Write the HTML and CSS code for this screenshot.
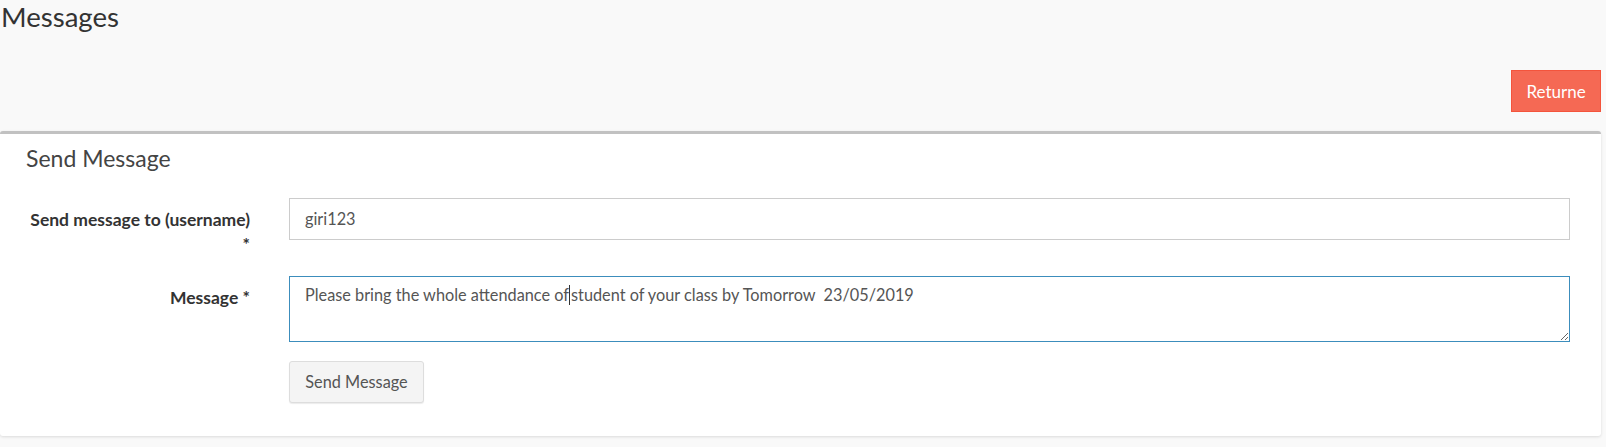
FILE: index.html
```html
<!DOCTYPE html>
<html>
<head>
<meta charset="utf-8">
<link rel="stylesheet" href="styles.css">
</head>
<body>
<div class="page">
  <header class="content-header">
    <h1 class="page-title">Messages</h1>
    <div class="header-actions">
      <button class="btn btn-danger">Returne</button>
    </div>
  </header>
  <section class="box">
    <div class="box-header">
      <h3 class="box-title">Send Message</h3>
    </div>
    <form class="box-body form">
      <div class="form-row">
        <label class="form-label">Send message to (username) *</label>
        <div class="form-field">
          <div class="input">giri123</div>
        </div>
      </div>
      <div class="form-row">
        <label class="form-label">Message *</label>
        <div class="form-field">
          <div class="textarea">Please bring the whole attendance of<span class="caret"></span>student of your class by Tomorrow&nbsp; 23/05/2019</div>
        </div>
      </div>
      <div class="form-row">
        <div class="form-label"></div>
        <div class="form-field">
          <button type="button" class="btn btn-default">Send Message</button>
        </div>
      </div>
    </form>
  </section>
</div>
</body>
</html>
```

FILE: styles.css
```css
* { box-sizing: border-box; }
html, body {
  margin: 0;
  padding: 0;
  background: #f9f9f9;
}
body {
  font-family: "Lato", "Open Sans", sans-serif;
  font-size: 17.5px;
  color: #333;
  height: 447px;
  overflow: hidden;
}
.page {
  padding: 0 5px 0 0;
}
.content-header {
  display: flex;
  flex-direction: column;
  height: 131px;
}
.page-title {
  margin: 0;
  padding: 2px 0 0 1px;
  font-size: 27.6px;
  line-height: 30px;
  font-weight: 400;
  color: #333;
}
.header-actions {
  display: flex;
  justify-content: flex-end;
  margin-top: 38px;
}
.btn {
  font-family: inherit;
  line-height: 1;
  height: 42px;
  padding: 0;
  white-space: nowrap;
  cursor: pointer;
}
.btn-danger {
  width: 90px;
  font-size: 17px;
  background: #f56954;
  border: 1px solid #f4543c;
  border-radius: 0;
  color: #fff;
}
.btn-default {
  width: 135px;
  font-size: 16.3px;
  background: #f4f4f4;
  border: 1px solid #ddd;
  border-radius: 3px;
  color: #555;
  box-shadow: 0 1px 1px rgba(0,0,0,0.08);
}
.box {
  background: #fff;
  border-top: 3px solid #c1c1c1;
  border-radius: 3px;
  box-shadow: 0 1px 3px rgba(0,0,0,0.12);
  height: 305px;
}
.box-header {
  padding: 12px 26px 0;
}
.box-title {
  margin: 0;
  font-size: 23px;
  line-height: 24px;
  font-weight: 400;
  color: #444;
}
.box-body {
  padding: 28px 31px 0 0;
}
.form-row {
  display: grid;
  grid-template-columns: 250px 1fr;
  column-gap: 39px;
  margin-bottom: 19px;
}
.form-label {
  text-align: right;
  font-weight: 700;
  padding: 9px 0 0 24px;
  line-height: 25px;
}
.form-field { min-width: 0; }
.input {
  height: 42px;
  border: 1px solid #ccc;
  padding: 9px 15px;
  line-height: 22px;
  font-size: 16.3px;
  color: #555;
}
.textarea {
  height: 66px;
  border: 1px solid #3c8dbc;
  padding: 7px 15px;
  line-height: 22px;
  font-size: 16.3px;
  color: #555;
  overflow: auto;
  resize: vertical;
}
.caret {
  display: inline-block;
  width: 0;
  height: 20px;
  border-left: 1px solid #333;
  vertical-align: -4px;
  margin-right: 1px;
}
```
